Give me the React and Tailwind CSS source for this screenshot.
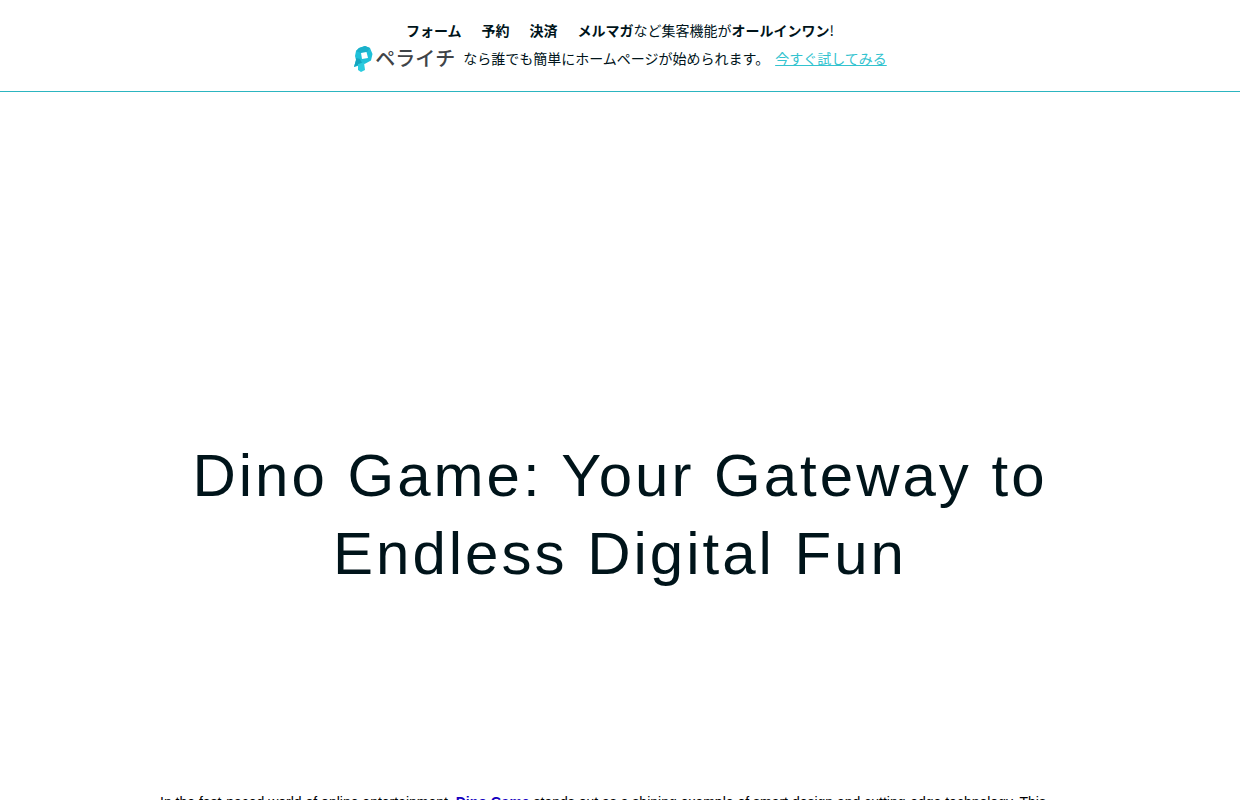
import React from "react"

const features = ["フォーム", "予約", "決済"];

const PeraichiLogo = () => (
    <span className="flex items-center gap-0.5 mr-2">
        <svg viewBox="0 0 20 28" className="w-5 h-7 shrink-0" aria-hidden="true">
            <path d="M6 4 L12 2 L17 4 L19.500 10 L18 16.500 L12.500 19.500 L8 21 L1 23 L3 16 L2 12 L3 7 Z" fill="#1fc0d8" />
            <path d="M3 14 L7 15 L9 19 L1 23 L3 16 Z" fill="#14a5bf" />
            <path d="M6 4 L12 2 L17 4 L14 8 L8 9 L3 7 Z" fill="#1ab0ca" />
            <path d="M5 20 L11 18.500 L12 26 L8 28 L5 26 Z" fill="#2accdf" />
            <path d="M8 9 L13.500 8 L15 14 L9 15 Z" fill="#fff" />
        </svg>
        <span className="text-[20px] leading-7 font-medium text-[#3f4448]">ペライチ</span>
    </span>
)

const PromoBanner = () => (
    <header className="pt-4 pb-[19px] px-4 border-b border-[#2cb5c0] text-sm leading-7 font-['Noto_Sans_CJK_JP',sans-serif]">
        <div className="flex flex-wrap justify-center gap-x-5">
            {features.map((feature) => (
                <b key={feature}>{feature}</b>
            ))}
            <span>
                <b>メルマガ</b>など集客機能が<b>オールインワン</b>!
            </span>
        </div>
        <div className="flex flex-wrap justify-center items-center">
            <PeraichiLogo />
            <span>なら誰でも簡単にホームページが始められます。</span>
            <a href="#start" className="ml-1.5 text-[#33c3cf] underline">今すぐ試してみる</a>
        </div>
    </header>
)

export default function App() {
    return (
        <div className="bg-white text-[#00141a] font-['Liberation_Sans',Arial,sans-serif]">
            <PromoBanner />
            <main>
                <section className="flex justify-center px-4 pt-[345px] pb-[197px]">
                    <h1 className="max-w-[920px] text-center text-[60px] leading-[78px] tracking-wider">
                        Dino Game: Your Gateway to Endless Digital Fun
                    </h1>
                </section>
                <section className="max-w-[920px] mx-auto pb-16">
                    <p className="text-sm leading-6 text-black">
                        In the fast-paced world of online entertainment, <a href="#dino-game" className="font-bold text-[#1400c0]">Dino Game</a> stands out as a shining example of smart design and cutting-edge technology. This
                    </p>
                </section>
            </main>
        </div>
    )
}
